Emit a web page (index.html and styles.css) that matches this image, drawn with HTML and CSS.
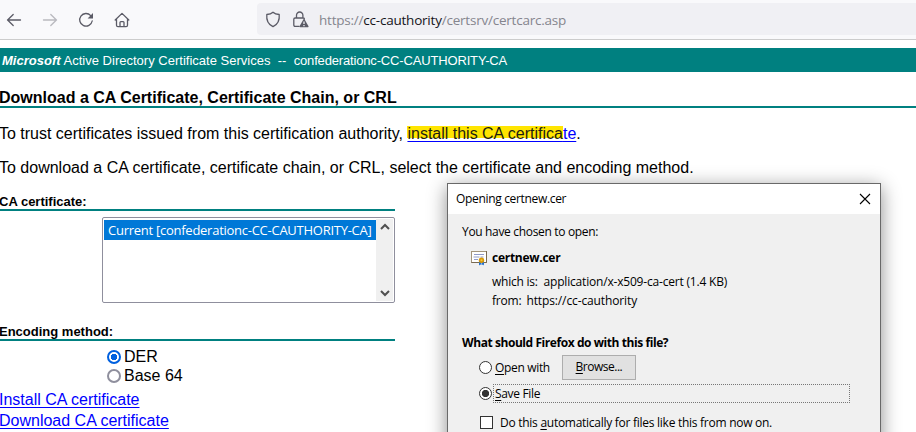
FILE: index.html
```html
<!DOCTYPE html>
<html lang="en">
<head>
<meta charset="utf-8">
<title>Active Directory Certificate Services</title>
<link rel="stylesheet" href="styles.css">
</head>
<body>
<header class="toolbar">
  <nav class="nav">
    <svg class="icon" width="16" height="16" viewBox="0 0 16 16"><path d="M14.5 8H1.5M7.2 2.5L1.6 8l5.6 5.5"/></svg>
    <svg class="icon faded" width="16" height="16" viewBox="0 0 16 16"><path d="M1.5 8h13M8.8 2.5L14.4 8l-5.6 5.5"/></svg>
    <svg class="icon" width="16" height="16" viewBox="0 0 16 16"><path d="M12.7 3.600A6.3 6.3 0 1 0 14.2 9"/><path class="fill" d="M15 1v5.5H9.6z"/></svg>
    <svg class="icon" width="16" height="16" viewBox="0 0 16 16"><path d="M1.2 8L8 1.4 14.8 8M2.5 7v6.2q0 1.4 1.4 1.4h8.2q1.4 0 1.4-1.4V7M6 14.5v-4q0-.9.9-.9h2.2q.9 0 .9.9v4"/></svg>
  </nav>
  <div class="urlbar">
    <svg class="icon" width="16" height="17" viewBox="0 0 16 17"><path d="M8 1.2c1.7 1.5 4 2.1 6.2 2.3.5 4.8-1 9.7-6.2 12.2C2.800 13.200 1.300 8.300 1.800 3.500 4 3.300 6.300 2.700 8 1.200z"/></svg>
    <svg class="icon lock" width="17" height="17" viewBox="0 0 17 17"><path d="M4.500 7V4.200a3.200 3.200 0 0 1 6.400 0V7M7 15.400H3.100q-1.300 0-1.300-1.300V8.300Q1.800 7 3.100 7h8.300q1 0 1 1"/><path class="fill" d="M11.500 8.300q.5-.7 1 0l4 7q.3.900-.6.900H8.100q-.9 0-.6-.9z"/><path class="mark" d="M12 10.500v2.500M12 14v1.200"/></svg>
    <span class="url">https://<b>cc-cauthority</b>/certsrv/certcarc.asp</span>
  </div>
</header>

<main class="page">
  <div class="banner"><b><i>Microsoft</i></b> Active Directory Certificate Services &nbsp;--&nbsp; <span class="authority">confederationc-CC-CAUTHORITY-CA</span></div>
  <h1 class="title">Download a CA Certificate, Certificate Chain, or CRL</h1>
  <p class="para">To trust certificates issued from this certification authority, <a class="install" href="#"><span class="marked">install this CA certifica</span>te</a>.</p>
  <p class="para">To download a CA certificate, certificate chain, or CRL, select the certificate and encoding method.</p>

  <h2 class="label">CA certificate:</h2>
  <div class="listbox">
    <div class="options"><div class="option"><span>Current [confederationc-CC-CAUTHORITY-CA]</span></div></div>
    <div class="scroll">
      <svg width="10" height="8" viewBox="0 0 10 8"><path d="M1 6l4-4 4 4"/></svg>
      <svg width="10" height="8" viewBox="0 0 10 8"><path d="M1 2l4 4 4-4"/></svg>
    </div>
  </div>
  <h2 class="label">Encoding method:</h2>
  <div class="radios">
    <div class="choice"><span class="radio on"></span>DER</div>
    <div class="choice"><span class="radio"></span>Base 64</div>
  </div>
  <div class="links">
    <a href="#">Install CA certificate</a>
    <a href="#">Download CA certificate</a>
  </div>
</main>

<section class="dialog">
  <div class="dialog-title">
    <span class="caption">Opening certnew.cer</span>
    <svg width="12" height="12" viewBox="0 0 12 12"><path d="M1 1l10 10M11 1L1 11"/></svg>
  </div>
  <div class="dialog-body">
    <div class="row chosen"><span class="t-chosen">You have chosen to open:</span></div>
    <div class="row file">
      <svg width="18" height="16" viewBox="0 0 18 16">
        <rect x=".5" y="1.500" width="15" height="11" fill="#fff" stroke="#a3957c"/>
        <path d="M.5 12.500h15v-11.500" fill="none" stroke="#7a6a50"/>
        <path d="M3 4.500h10M2.500 7h6M9.500 7h3M3 9.500h4" stroke="#8f9bc9"/>
        <path d="M8 11v4.500l1.500-1 1 .5V12zM11 12v3l1-.5 1 1v-5z" fill="#2672cf"/>
        <circle cx="10.500" cy="10.200" r="2.700" fill="#d99a08"/><circle cx="10.500" cy="10.200" r="1" fill="#f4c542"/>
      </svg>
      <b class="t-name">certnew.cer</b>
    </div>
    <div class="row detail"><span class="t-which">which is:</span><span class="t-type">application/x-x509-ca-cert (1.4 KB)</span></div>
    <div class="row detail from"><span class="t-from">from:</span><span class="t-host">https://cc-cauthority</span></div>
    <div class="row question"><b class="t-question">What should Firefox do with this file?</b></div>
    <div class="row open"><span class="dradio"></span><span class="t-open"><u>O</u>pen with</span><span class="button"><span class="t-browse"><u>B</u>rowse...</span></span></div>
    <div class="row save"><span class="dradio on"></span><span class="focus"><span class="t-save"><u>S</u>ave File</span></span></div>
    <div class="row auto"><span class="check"></span><span class="t-auto">Do this <u>a</u>utomatically for files like this from now on.</span></div>
  </div>
</section>
</body>
</html>
```
FILE: styles.css
```css
* { box-sizing: border-box; }
html, body { margin: 0; height: 432px; overflow: hidden; }
body { background: #fff; color: #000; font: 16px/20px "Liberation Sans", Arial, sans-serif; position: relative; }
h1, h2, p { margin: 0; }
a { color: #00f; }

.toolbar { height: 40px; background: #f9f9fb; border-bottom: 1px solid #ccc; display: flex; }
.nav { width: 257px; padding: 12px 0 0 6px; display: flex; gap: 20px; flex: none; }
.icon { display: block; flex: none; fill: none; stroke: #5b5b66; stroke-width: 1.3; stroke-linecap: round; stroke-linejoin: round; }
.icon .fill { fill: #5b5b66; stroke: none; }
.icon .mark { stroke: #f0f0f4; stroke-linecap: butt; }
.faded { opacity: .4; }
.urlbar { flex: 1; height: 32px; margin-top: 3px; padding-left: 8px; background: #f0f0f4; border-radius: 4px 0 0 4px; display: flex; align-items: center; }
.lock { margin-left: 11px; }
.url { margin: 2px 0 0 10px; font: 13.500px/20px "Open Sans", sans-serif; letter-spacing: -.22px; color: #85858e; white-space: nowrap; }
.url b { font-weight: 400; color: #15141a; }

.page { padding-top: 8px; white-space: nowrap; }
.banner { height: 24px; padding-left: 2px; background: #008080; color: #fff; font-size: 13px; line-height: 25px; letter-spacing: .01px; }
.authority { letter-spacing: -.16px; }
.title { height: 36px; padding-top: 16px; margin-left: -1px; border-bottom: 2px solid #008080; font-size: 16px; line-height: 20px; }
.para { margin: 16px 0 0 -1px; line-height: 20px; letter-spacing: -.005px; }
.para + .para { margin-top: 14px; letter-spacing: 0; }
.install { text-decoration-thickness: 1px; text-underline-offset: 2px; }
.marked { color: #1d1d10; background: linear-gradient(#ffe500, #ffe500) 0 1px / 100% 12px no-repeat; }
.label { width: 396px; height: 20px; margin: 13px 0 0 -1px; border-bottom: 2px solid #008080; font-size: 13px; line-height: 21px; }
.listbox { width: 293px; height: 86px; margin: 6px 0 0 102px; padding: 1px; border: 1px solid #8f8f9d; border-radius: 2px; display: flex; }
.options { flex: 1; min-width: 0; padding-top: 1px; }
.option { height: 20px; padding-left: 4px; background: #0078d7; color: #fff; font: 13px/20px "Open Sans", sans-serif; letter-spacing: -.26px; }
.scroll { width: 17px; flex: none; background: #f0f0f0; display: flex; flex-direction: column; align-items: center; justify-content: space-between; padding: 4px 0; }
.scroll svg { fill: none; stroke: #505050; stroke-width: 2; }
.listbox + .label { margin-top: 18px; }
.radios { padding: 6px 0 0 107px; }
.choice { height: 19px; display: flex; align-items: center; gap: 3px; }
.radio { width: 14px; height: 14px; border: 2px solid #8f8f9d; border-radius: 50%; flex: none; }
.radio.on { border-color: #0060df; background: radial-gradient(circle, #0060df 0 3px, #fff 3.500px); }
.links { margin: 5px 0 0 -1px; display: flex; flex-direction: column; align-items: flex-start; }
.links a { height: 21px; text-decoration-thickness: 1px; text-underline-offset: 2px; }

.dialog { position: absolute; left: 447px; top: 183px; width: 434px; height: 270px; border: 1px solid #696969; background: #f0f0f0; box-shadow: 0 4px 18px rgba(0,0,0,.45); font: 12px/16px "Open Sans", sans-serif; white-space: nowrap; }
.dialog-title { height: 30px; padding: 0 9px 0 8px; background: #fff; display: flex; align-items: center; justify-content: space-between; }
.dialog-title svg { stroke: #000; stroke-width: 1.100; }
.dialog-body { padding: 10px 0 0 14px; }
.row { display: flex; align-items: center; }
.chosen { height: 16px; }
.file { height: 18px; margin-top: 9px; padding-left: 9px; gap: 3px; }
.detail { height: 18px; margin-top: 6px; padding-left: 30px; gap: 6px; }
.from { margin-top: 1px; gap: 5px; }
.question { height: 20px; margin-top: 23px; }
.open { height: 26px; margin-top: 1px; padding-left: 17px; }
.dradio { width: 13px; height: 13px; border: 1px solid #333; border-radius: 50%; background: #fff; flex: none; }
.dradio.on { background: radial-gradient(circle, #333 0 3.300px, #fff 4px); }
.caption, .t-chosen { letter-spacing: -.33px; }
.t-name { letter-spacing: -.27px; }
.t-which { letter-spacing: -.25px; }
.t-type { letter-spacing: -.19px; }
.t-from { letter-spacing: -.2px; }
.t-host { letter-spacing: -.12px; }
.t-question { letter-spacing: -.43px; }
.t-open { margin-left: 3px; padding-top: 2px; letter-spacing: -.33px; }
.t-browse { letter-spacing: -.5px; }
.button { width: 74px; height: 25px; margin-left: 12px; border: 1px solid #adadad; background: #e1e1e1; display: flex; align-items: center; justify-content: center; }
.save { height: 19px; margin-top: 4px; padding-left: 17px; }
.focus { width: 357px; height: 19px; padding-left: 1px; margin-left: 1px; border: 1px dotted #777; line-height: 17px; letter-spacing: -.33px; }
.auto { height: 18px; margin-top: 10px; padding-left: 18px; gap: 7px; }
.t-auto { padding-top: 2px; letter-spacing: -.27px; }
.check { width: 13px; height: 13px; border: 1px solid #333; background: #fff; }
u { text-decoration-thickness: 1px; text-underline-offset: 2px; }
```
